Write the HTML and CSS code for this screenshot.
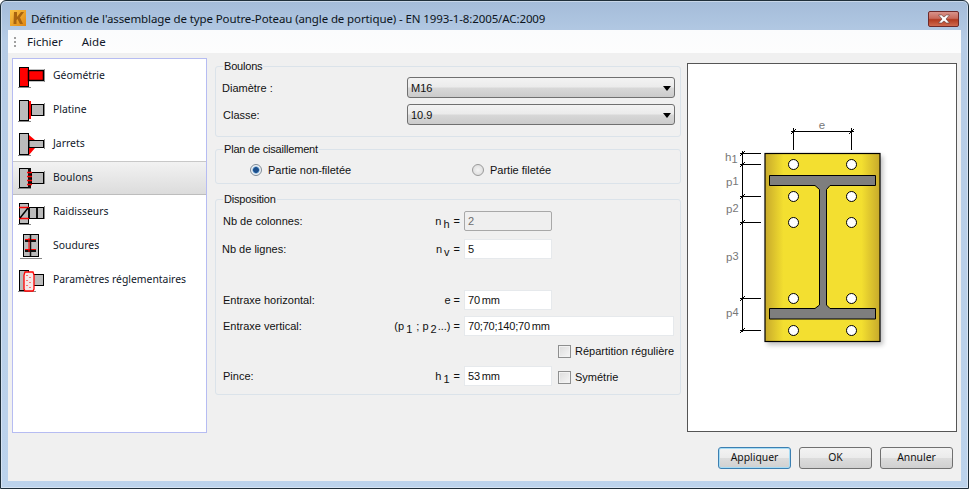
FILE: index.html
```html
<!DOCTYPE html>
<html lang="fr">
<head>
<meta charset="utf-8">
<title>Définition de l'assemblage</title>
<link rel="stylesheet" href="styles.css">
</head>
<body>
<div class="window">
  <header class="titlebar">
    <svg class="logo" width="16" height="16" viewBox="0 0 16 16"><defs><linearGradient id="lg" x1="0" y1="0" x2="1" y2="1"><stop offset="0" stop-color="#f9c445"/><stop offset="1" stop-color="#e08612"/></linearGradient></defs><rect width="16" height="16" fill="url(#lg)"/><path d="M4 2h3v5l4-5h3l-4 5.500 3 6.500h-3l-2.500-5-1 1.200v3.800h-3z" fill="#a8640f"/></svg>
    <span class="title">Définition de l'assemblage de type Poutre-Poteau (angle de portique) - EN 1993-1-8:2005/AC:2009</span>
    <div class="close"><svg width="14" height="10" viewBox="0 0 14 10"><path d="M1.500 1h3l2.500 2 2.500-2h3l-3.500 4 3.500 4h-3l-2.500-2-2.500 2h-3l3.500-4z" fill="#fff" stroke="#5c3a3a" stroke-width=".6"/></svg></div>
  </header>
  <div class="client">
    <nav class="menubar">
      <span class="grip"></span>
      <span class="menu">Fichier</span>
      <span class="menu">Aide</span>
    </nav>
    <div class="body">
      <aside class="sidebar">
        <div class="item">
          <svg class="icon" viewBox="17 0 30 34" width="30" height="34"><path d="M18 28.500h13" stroke="#888"/><rect x="19.500" y="8.500" width="9" height="19" fill="#f00" stroke="#000"/><rect x="28.500" y="11.500" width="15" height="10" fill="#f00" stroke="#000" stroke-width="1.500"/><path d="M44.500 10v13" stroke="#888"/></svg>
          <span>Géométrie</span>
        </div>
        <div class="item">
          <svg class="icon" viewBox="17 0 30 34" width="30" height="34"><path d="M18 28.500h13" stroke="#888"/><rect x="19.500" y="7.500" width="9" height="20" fill="#bbb" stroke="#000"/><rect x="29" y="8" width="2" height="18" fill="#f00"/><rect x="31.500" y="11.500" width="12" height="11" fill="#bbb" stroke="#000"/><path d="M44.500 10v13" stroke="#888"/></svg>
          <span>Platine</span>
        </div>
        <div class="item">
          <svg class="icon" viewBox="17 0 30 34" width="30" height="34"><path d="M18 28.500h13" stroke="#888"/><rect x="19.500" y="6.500" width="9" height="21" fill="#bbb" stroke="#000"/><path d="M29 8l6 5h-6zM29 21h6l-6 7z" fill="#f00"/><rect x="29" y="13.500" width="14.500" height="7" fill="#bbb" stroke="#000"/><path d="M44.500 12v10" stroke="#888"/></svg>
          <span>Jarrets</span>
        </div>
        <div class="item selected">
          <svg class="icon" viewBox="17 0 30 34" width="30" height="34"><path d="M18 27.500h13" stroke="#888"/><rect x="19.500" y="7.500" width="9" height="19" fill="#bbb" stroke="#000"/><rect x="31.500" y="11.500" width="12" height="11" fill="#bbb" stroke="#000"/><rect x="28" y="7" width="3" height="20" fill="#111"/><path d="M27 11.500h5M27 15.500h5M27 19.500h5M27 23.500h5" stroke="#f00" stroke-width="1.500"/><path d="M44.500 10v13" stroke="#888"/></svg>
          <span>Boulons</span>
        </div>
        <div class="item">
          <svg class="icon" viewBox="17 0 30 34" width="30" height="34"><path d="M18 29.500h13" stroke="#888"/><rect x="19.500" y="8.500" width="9" height="20" fill="#bbb" stroke="#000"/><path d="M19 12.500h10M19 23.500h10" stroke="#f00" stroke-width="1.500"/><path d="M20 23l8-10" stroke="#000" stroke-width="1.500"/><rect x="29.500" y="12.500" width="14" height="11" fill="#bbb" stroke="#000"/><path d="M29 13v10M37 13v10" stroke="#111" stroke-width="2"/><path d="M44.500 11v13" stroke="#888"/></svg>
          <span>Raidisseurs</span>
        </div>
        <div class="item">
          <svg class="icon" viewBox="17 0 30 34" width="30" height="34"><path d="M20 29.500h22" stroke="#888"/><rect x="23.500" y="5.500" width="15" height="22" fill="#bbb" stroke="#000"/><path d="M25 11.500h11M25 21.500h11" stroke="#111" stroke-width="3"/><path d="M25 10.500h11M25 20.500h11" stroke="#f00"/><path d="M30.500 6v21" stroke="#111" stroke-width="1.500"/><path d="M29 9v14" stroke="#f00"/></svg>
          <span>Soudures</span>
        </div>
        <div class="item">
          <svg class="icon" viewBox="17 0 30 34" width="30" height="34"><path d="M18 28.500h18" stroke="#888"/><rect x="19.500" y="7.500" width="9" height="20" fill="#bbb" stroke="#000"/><rect x="33.500" y="11.500" width="10" height="11" fill="#bbb" stroke="#000"/><path d="M25 9h8l1 3v14l-1 2h-8l-1-2v-14z" fill="#f6e8e8" stroke="#f00" stroke-width="1.300"/><path d="M27 12v1M30 14v1M27 17v1M30 19v1M27 22v1M30 24v1" stroke="#f00"/></svg>
          <span>Paramètres réglementaires</span>
        </div>
      </aside>

      <main class="forms">
        <fieldset class="group group-bolts">
          <legend>Boulons</legend>
          <div class="select-grid">
            <label class="tight">Diamètre :</label>
            <div class="select">M16<span class="arrow"></span></div>
            <label>Classe:</label>
            <div class="select">10.9<span class="arrow"></span></div>
          </div>
        </fieldset>

        <fieldset class="group group-plane">
          <legend>Plan de cisaillement</legend>
          <div class="radios">
            <div class="radio-item"><span class="radio on"></span>Partie non-filetée</div>
            <div class="radio-item"><span class="radio"></span>Partie filetée</div>
          </div>
        </fieldset>

        <fieldset class="group group-layout">
          <legend>Disposition</legend>
          <div class="layout-grid">
            <span>Nb de colonnes:</span>
            <span class="sym">n<sub>h</sub> =</span>
            <div class="input disabled">2</div>
            <span></span>

            <span class="tight">Nb de lignes:</span>
            <span class="sym">n<sub>v</sub> =</span>
            <div class="input">5</div>
            <span></span>

            <span>Entraxe horizontal:</span>
            <span class="sym">e =</span>
            <div class="input">70 mm</div>
            <span></span>

            <span>Entraxe vertical:</span>
            <span class="sym">(p<sub>1</sub> ; p<sub>2</sub>...) =</span>
            <div class="input wide">70;70;140;70 mm</div>

            <span class="check-cell"><span class="check"></span>Répartition régulière</span>

            <span class="last-label">Pince:</span>
            <span class="sym last-sym">h<sub>1</sub> =</span>
            <div class="input last-input">53 mm</div>
            <span class="check-cell single"><span class="check"></span>Symétrie</span>
          </div>
        </fieldset>
      </main>

      <section class="preview">
        <svg class="drawing" width="268" height="367" viewBox="688 64 268 367">
          <defs>
            <linearGradient id="plate" x1="0" x2="1" y1="0" y2="0">
              <stop offset="0" stop-color="#c7a92b"/>
              <stop offset=".16" stop-color="#f3df30"/>
              <stop offset=".84" stop-color="#f3df30"/>
              <stop offset="1" stop-color="#c7a92b"/>
            </linearGradient>
            <filter id="soft" x="-10%" y="-10%" width="120%" height="120%"><feGaussianBlur stdDeviation="2.500"/></filter>
          </defs>
          <rect x="767" y="156" width="116" height="189" fill="#000" opacity=".25" filter="url(#soft)"/>
          <rect x="765" y="153.500" width="115" height="188" fill="url(#plate)" stroke="#000" stroke-width="1.200"/>
          <path d="M769.500 175.500H875.500V185.500H830L826.500 189.500V305L830 308.500H875.500V319H769.500V308.500H815L819.500 305V189.500L815 185.500H769.500Z" fill="#7e7e7e" stroke="#000"/>
          <g fill="#fff" stroke="#000" stroke-width="1">
            <circle cx="793.500" cy="164.500" r="5"/><circle cx="851.500" cy="164.500" r="5"/>
            <circle cx="793.500" cy="196.500" r="5"/><circle cx="851.500" cy="196.500" r="5"/>
            <circle cx="793.500" cy="222.500" r="5"/><circle cx="851.500" cy="222.500" r="5"/>
            <circle cx="793.500" cy="298.500" r="5"/><circle cx="851.500" cy="298.500" r="5"/>
            <circle cx="793.500" cy="330.500" r="5"/><circle cx="851.500" cy="330.500" r="5"/>
          </g>
          <g stroke="#000" stroke-width="1" fill="none">
            <path d="M793.500 128v22M851.500 128v22M791 131.500h63"/>
            <path d="M742.500 151v181"/>
            <path d="M740 153.500h21M740 164.500h21M740 196.500h21M740 222.500h21M740 298.500h21M740 330.500h21"/>
            <path d="M791 134l5-5M849 134l5-5M740 156l5-5M740 167l5-5M740 199l5-5M740 225l5-5M740 301l5-5M740 333l5-5"/>
          </g>
          <g class="dim">
            <text x="822" y="129" text-anchor="middle">e</text>
            <text x="725" y="161">h<tspan class="dsub" dy="2">1</tspan></text>
            <text x="726" y="186">p<tspan class="dsub" dy="-1">1</tspan></text>
            <text x="726" y="213">p<tspan class="dsub" dy="-1">2</tspan></text>
            <text x="726" y="261">p<tspan class="dsub" dy="-1">3</tspan></text>
            <text x="726" y="317">p<tspan class="dsub" dy="-1">4</tspan></text>
          </g>
        </svg>
      </section>
    </div>
    <footer class="footer">
      <div class="btn default">Appliquer</div>
      <div class="btn">OK</div>
      <div class="btn">Annuler</div>
    </footer>
  </div>
</div>
</body>
</html>
```
FILE: styles.css
```css
* { box-sizing: border-box; }
html, body { margin: 0; padding: 0; background: #fff; }
body { width: 969px; height: 489px; overflow: hidden; font-family: "Liberation Sans", Arial, sans-serif; font-size: 11px; color: #111; }

.window {
  width: 969px; height: 489px;
  display: flex; flex-direction: column;
  padding: 0 8px 7px;
  background: linear-gradient(180deg, #a4bcd9 0, #b6cce6 40px, #bcd3ec 100%);
  border: 1px solid #1f2f3a;
  border-radius: 6px 6px 0 0;
  box-shadow: inset 0 0 0 1px rgba(255,255,255,.4);
  margin: 0;
}
.titlebar { height: 29px; flex: none; display: flex; align-items: center; margin-left: 1px; position: relative; }
.logo { flex: none; margin-top: 5px; margin-left: 0; }
.title { font-family: "Noto Sans", sans-serif; font-size: 11.500px; letter-spacing: -.11px; margin-left: 5px; margin-top: 6px; color: #0c1420; white-space: nowrap; }
.close {
  width: 31px; height: 16px; margin-left: auto; margin-top: 7px; margin-right: 1px;
  display: flex; align-items: center; justify-content: center;
  border: 1px solid #6e2a2a; border-radius: 2px;
  background: linear-gradient(180deg, #d9938a 0, #c96a5b 45%, #b23a20 55%, #cf6a4f 100%);
}

.client { flex: 1; display: flex; flex-direction: column; background: #f0f0f0; margin-right: -1px; margin-left: -1px; }
.menubar {
  height: 23px; flex: none; display: flex; align-items: center;
  background: linear-gradient(180deg, #fbfcfd, #fdfdfd);
  font-family: "Noto Sans", sans-serif; font-size: 11.500px; color: #10182a;
}
.grip { width: 2px; height: 10px; margin-left: 6px; background: repeating-linear-gradient(180deg, #a0a0a0 0 2px, transparent 2px 4px); }
.menu { margin-left: 11px; }
.menu + .menu { margin-left: 19px; }

.body { flex: 1; display: flex; align-items: flex-start; padding: 5px 0 0 4px; }

.sidebar {
  width: 195px; height: 375px; flex: none;
  background: #fff; border: 1px solid #b6bcf2;
  font-family: "Noto Sans", sans-serif; font-size: 10.400px; color: #10182a;
}
.item { height: 34px; display: flex; align-items: center; gap: 6px; padding-left: 4px; }
.item span { white-space: nowrap; padding-bottom: 2px; }
.icon { flex: none; }
.selected { background: linear-gradient(180deg, #f2f2f2, #dcdcdc); border-top: 1px solid #c8c8c8; border-bottom: 1px solid #bdbdbd; }

.forms { width: 466px; flex: none; margin-left: 8px; display: flex; flex-direction: column; padding-top: 1px; }
.group { margin: 0; padding: 0; border: 1px solid #dbe3ea; border-radius: 3px; min-width: 0; }
.group legend { margin-left: 7px; padding: 0 1px; line-height: 14px; font-size: 11px; letter-spacing: -.2px; }
.group-bolts { height: 78px; }
.group-plane { height: 42px; margin-top: 5px; }
.group-layout { height: 203px; margin-top: 8px; }

.tight { margin-left: -1px; }
.select-grid { display: grid; grid-template-columns: 184px 268px; grid-auto-rows: 21px; row-gap: 6px; padding: 4px 0 0 7px; align-items: center; }
.select {
  position: relative; height: 21px; padding-left: 3px; line-height: 20px;
  border: 1px solid #707070; border-radius: 3px;
  background: linear-gradient(180deg, #f3f3f3 0, #ebebeb 48%, #d8d8d8 52%, #cbcbcb 100%);
}
.arrow { position: absolute; right: 3px; top: 8px; border: 4px solid transparent; border-top: 5px solid #000; border-bottom: 0; }

.radios { display: flex; padding: 5px 0 0 34px; height: 23px; }
.radio-item { display: flex; align-items: center; gap: 6px; flex: none; width: 222px; line-height: 18px; }
.radio { width: 12px; height: 12px; flex: none; border-radius: 50%; border: 1px solid #9a9a9a; background: radial-gradient(circle, #f4f4f4, #d8d8d8); }
.radio.on { background: radial-gradient(circle, #1d4f8c 0 2.500px, #5a93c8 3px, #eef2f6 4px); border-color: #7e8a96; }

.layout-grid {
  display: grid; grid-template-columns: 154px 87px 88px 116px;
  grid-template-rows: 28px 51px 26px 26px 24px 20px;
  padding: 5px 0 0 7px; line-height: 20px; font-size: 11px;
}
.last-label { grid-row: 6; grid-column: 1; }
.last-sym { grid-row: 6; grid-column: 2; }
.last-input { grid-row: 6; grid-column: 3; }
.sym { text-align: right; padding-right: 4px; white-space: nowrap; }
.sym sub { font-size: 11px; line-height: 0; margin-left: 2px; margin-right: 1px; vertical-align: -3px; }
.input { height: 20px; width: 88px; padding-left: 3px; line-height: 19px; background: #fff; border: 1px solid #e6e9ec; white-space: nowrap; letter-spacing: -.2px; word-spacing: -1px; }
.input.disabled { background: #efefef; border: 1px solid #a8a8a8; border-radius: 2px; color: #6d6d6d; }
.input.wide { width: 210px; grid-column: 3 / 5; }
.check-cell { grid-column: 3 / 5; grid-row: 5; display: flex; align-items: center; gap: 4px; padding-left: 94px; height: 20px; margin-top: -1px; white-space: nowrap; }
.check-cell.single { grid-column: 4; grid-row: 6; padding-left: 6px; margin-top: 1px; }
.check { width: 13px; height: 13px; flex: none; border: 1px solid #8e8f8f; background: linear-gradient(135deg, #dcdcdc, #f6f6f6); box-shadow: inset 0 0 0 1px #f2f2f2; }

.preview { width: 270px; height: 369px; flex: none; margin-left: 6px; margin-top: 5px; background: #fff; border: 1px solid #555; }
.drawing { display: block; }
.dim text { font-family: "Liberation Sans", sans-serif; font-size: 11.500px; fill: #777; }
.dim .dsub { font-size: 11px; }

.footer { height: 47px; flex: none; display: flex; justify-content: flex-end; gap: 8px; padding: 0 8px 0 0; margin-top: 0; }
.btn {
  width: 73px; height: 22px; margin-top: 13px; text-align: center; line-height: 19px;
  font-family: "Noto Sans", sans-serif; font-size: 10.400px;
  border: 1px solid #707070; border-radius: 3px;
  background: linear-gradient(180deg, #f3f3f3 0, #ebebeb 48%, #dcdcdc 52%, #d0d0d0 100%);
}
.btn.default { border: 1px solid #3c7fb1; box-shadow: inset 0 0 0 1px #a6dcf5; }
```
